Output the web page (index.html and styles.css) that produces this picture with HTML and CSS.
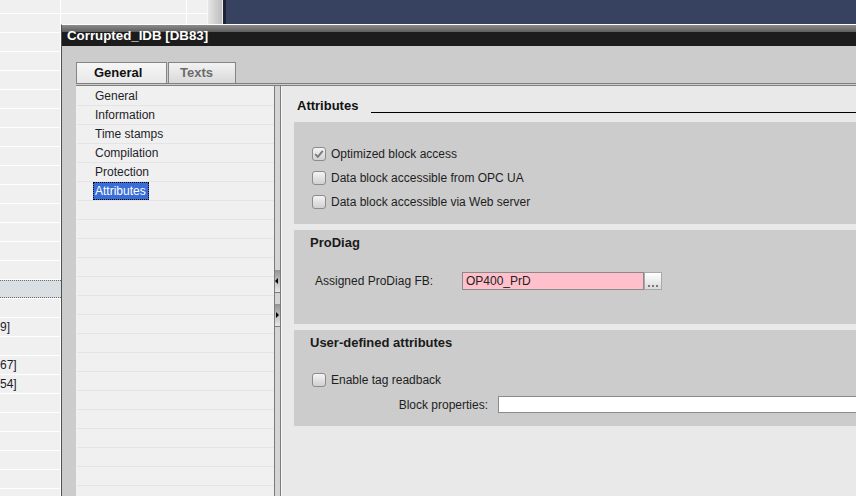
FILE: index.html
```html
<!DOCTYPE html>
<html>
<head>
<meta charset="utf-8">
<link rel="stylesheet" href="styles.css">
</head>
<body>
<div class="desk">
  <div class="app-list">
    <div class="ar first"></div>
    <div class="ar"></div><div class="ar"></div><div class="ar"></div><div class="ar"></div><div class="ar"></div>
    <div class="ar"></div><div class="ar"></div><div class="ar"></div><div class="ar"></div><div class="ar"></div>
    <div class="ar"></div><div class="ar"></div><div class="ar"></div><div class="ar"></div>
    <div class="ar"><div class="ar-sel"></div></div>
    <div class="ar"></div>
    <div class="ar">9]</div>
    <div class="ar"></div>
    <div class="ar">67]</div>
    <div class="ar">54]</div>
    <div class="ar"></div><div class="ar"></div><div class="ar"></div><div class="ar"></div><div class="ar"></div>
  </div>
  <div class="app-sep"></div>
  <div class="app-navy"></div>
</div>

<div class="win">
  <div class="win-title">Corrupted_IDB [DB83]</div>
  <div class="win-body">
    <div class="tabs">
      <div class="tab tab-general">General</div>
      <div class="tab tab-texts">Texts</div>
    </div>
    <div class="frame">
      <div class="frame-inner">
        <div class="nav">
          <div class="ni"><span>General</span></div>
          <div class="ni"><span>Information</span></div>
          <div class="ni"><span>Time stamps</span></div>
          <div class="ni"><span>Compilation</span></div>
          <div class="ni"><span>Protection</span></div>
          <div class="ni"><span class="sel">Attributes</span></div>
          <div class="ni"></div><div class="ni"></div><div class="ni"></div><div class="ni"></div>
          <div class="ni"></div><div class="ni"></div><div class="ni"></div><div class="ni"></div>
          <div class="ni"></div><div class="ni"></div><div class="ni"></div><div class="ni"></div>
          <div class="ni"></div><div class="ni"></div><div class="ni"></div>
        </div>
        <div class="split">
          <div class="sbtn sbtn-1"><i class="tri-l"></i></div>
          <div class="sbtn sbtn-2"><i class="tri-r"></i></div>
        </div>
        <div class="content">
          <div class="sec-title"><span>Attributes</span><div class="rule"></div></div>

          <div class="panel panel-1">
            <div class="chk-row">
              <div class="cb"><svg width="12" height="12" viewBox="0 0 12 12"><path d="M2.2 6.2 L4.8 8.8 L9.8 2.8" fill="none" stroke="#7a7a7a" stroke-width="1.9"/></svg></div>
              <span>Optimized block access</span>
            </div>
            <div class="chk-row"><div class="cb"></div><span>Data block accessible from OPC UA</span></div>
            <div class="chk-row"><div class="cb"></div><span>Data block accessible via Web server</span></div>
          </div>

          <div class="panel panel-2">
            <div class="ph">ProDiag</div>
            <div class="field">
              <div class="flabel">Assigned ProDiag FB:</div>
              <div class="finput">OP400_PrD</div>
              <div class="fbtn"><i></i><i></i><i></i></div>
            </div>
          </div>

          <div class="panel panel-3">
            <div class="ph">User-defined attributes</div>
            <div class="chk-row chk-3"><div class="cb"></div><span>Enable tag readback</span></div>
            <div class="field2">
              <div class="f2label">Block properties:</div>
              <div class="f2input"></div>
            </div>
          </div>
        </div>
      </div>
    </div>
  </div>
</div>
</body>
</html>
```

FILE: styles.css
```css
body {
  margin: 0;
  width: 856px;
  height: 496px;
  overflow: hidden;
  position: relative;
  font-family: "Liberation Sans", Arial, sans-serif;
  font-size: 12px;
  color: #1e1e1e;
  background: #f0f0f0;
}

/* background application */
.desk {
  display: flex;
  height: 496px;
  overflow: hidden;
}
.app-list {
  width: 207px;
  height: 496px;
  overflow: hidden;
  background:
    linear-gradient(to right, transparent 60px, #fff 60px, #fff 61px, transparent 61px,
      transparent 186px, #fff 186px, #fff 187px, transparent 187px),
    #f0f0f0;
}
.ar {
  height: 18px;
  border-bottom: 1px solid #fff;
  line-height: 18px;
  white-space: nowrap;
  overflow: hidden;
  color: #1c1c2c;
}
.ar.first { height: 13px; }
.ar-sel {
  height: 18px;
  box-sizing: border-box;
  background: #dadfe4;
  border-top: 1px dotted #6a6a6a;
  border-bottom: 1px dotted #6a6a6a;
}
.app-sep {
  width: 19px;
  background: linear-gradient(to right, #f7f7f7 0, #f7f7f7 1px, #e6e6e6 1px, #bcbcbc 15px,
    #ececec 15px, #ececec 16px, #1d2336 16px, #1d2336 19px);
}
.app-navy {
  flex: 1;
  background: #374261;
}

/* dialog window */
.win {
  position: absolute;
  left: 61px;
  top: 24px;
  width: 794px;
  height: 471px;
  border-left: 1px solid #505050;
  border-top: 1px solid #fff;
  background: #cccccc;
  display: flex;
  flex-direction: column;
  overflow: hidden;
}
.win-title {
  height: 21px;
  box-sizing: border-box;
  background: linear-gradient(#8c8c8c, #5e5e5e 7px, #1c1c1c 7px);
  color: #fff;
  font-weight: bold;
  font-size: 13.3px;
  line-height: 21px;
  padding-left: 5px;
}
.win-body {
  flex: 1;
  min-height: 0;
  padding: 16px 0 0 14px;
  display: flex;
  flex-direction: column;
}
.tabs {
  display: flex;
  gap: 1px;
  height: 21px;
}
.tab {
  box-sizing: border-box;
  height: 21px;
  border: 1px solid #858585;
  border-bottom: 0;
  font-size: 13px;
  font-weight: bold;
  line-height: 20px;
}
.tab-general {
  width: 91px;
  padding-left: 17px;
  background: linear-gradient(#f6f6f6, #e8e8e8);
  color: #111;
}
.tab-texts {
  width: 68px;
  padding-left: 11px;
  background: linear-gradient(#f2f2f2, #d9d9d9);
  color: #6c6c6c;
}
.frame {
  flex: 1;
  min-height: 0;
  border-top: 1px solid #7f7f7f;
  padding-top: 1px;
  display: flex;
  flex-direction: column;
}
.frame-inner {
  flex: 1;
  min-height: 0;
  border-top: 1px solid #7f7f7f;
  display: flex;
}

/* navigation list */
.nav {
  width: 198px;
  box-sizing: border-box;
  padding-top: 1px;
  background: #f0f0f0;
  overflow: hidden;
}
.ni {
  height: 18px;
  border-bottom: 1px solid #e4e4e4;
  margin-left: 1px;
  padding-left: 16px;
}
.ni span {
  display: inline-block;
  line-height: 16px;
  border: 1px solid transparent;
  padding: 0 2px 0 1px;
  color: #1e1e2a;
}
.ni span.sel {
  background: #3a6ed7;
  color: #fff;
  border: 1px dotted #000;
}

/* splitter */
.split {
  width: 7px;
  box-sizing: border-box;
  border-left: 1px solid #7b7b7b;
  border-right: 1px solid #7b7b7b;
  background: #d4d4d4;
}
.sbtn {
  height: 23px;
  box-sizing: border-box;
  background: linear-gradient(#939393, #e8e8e8);
  border-bottom: 1px solid #7b7b7b;
  display: flex;
  align-items: center;
}
.sbtn-1 { margin-top: 184px; }
.sbtn-2 { margin-top: 11px; }
.tri-l {
  width: 0;
  height: 0;
  border-right: 3px solid #000;
  border-top: 3px solid transparent;
  border-bottom: 3px solid transparent;
}
.tri-r {
  width: 0;
  height: 0;
  border-left: 3px solid #000;
  border-top: 3px solid transparent;
  border-bottom: 3px solid transparent;
  margin-left: 1px;
}

/* content */
.content {
  flex: 1;
  border-left: 1px solid #f7f7f7;
  background: #e9e9e9;
  padding: 12px 0 0 12px;
}
.sec-title {
  display: flex;
  height: 16px;
  padding-left: 3px;
  font-size: 13px;
  font-weight: bold;
  line-height: 16px;
  color: #111;
}
.rule {
  flex: 1;
  height: 14px;
  border-bottom: 1px solid #000;
  margin-left: 13px;
}
.panel {
  background: #cccccc;
  margin-top: 6px;
}
.panel-1 {
  margin-top: 8px;
  padding: 20px 0 10px 18px;
}
.panel-2 { padding: 5px 0 34px 0; }
.panel-3 { padding: 5px 0 13px 0; }
.ph {
  padding-left: 16px;
  font-size: 13px;
  font-weight: bold;
  line-height: 16px;
  color: #1a1a1a;
}
.chk-row {
  display: flex;
  align-items: center;
  height: 24px;
}
.chk-3 {
  margin-top: 17px;
  padding-left: 18px;
}
.cb {
  width: 14px;
  height: 14px;
  box-sizing: border-box;
  border: 1px solid #8c8c8c;
  border-radius: 3px;
  background: linear-gradient(#f4f4f4, #d0d0d0);
  margin-right: 5px;
  display: flex;
  align-items: center;
  justify-content: center;
}
.cb svg { display: block; }
.field {
  display: flex;
  align-items: center;
  height: 18px;
  margin-top: 21px;
  padding-left: 21px;
}
.flabel { width: 147px; }
.finput {
  width: 182px;
  height: 18px;
  box-sizing: border-box;
  border: 1px solid #8a8a8a;
  background: #ffc0cb;
  padding-left: 3px;
  line-height: 16px;
  color: #222;
}
.fbtn {
  width: 18px;
  height: 18px;
  box-sizing: border-box;
  border: 1px solid #a9a9a9;
  background: linear-gradient(#ffffff, #dadada);
  display: flex;
  align-items: flex-end;
  gap: 2px;
  padding: 0 0 2px 3px;
}
.fbtn i {
  width: 2px;
  height: 2px;
  background: #777;
}
.field2 {
  display: flex;
  align-items: center;
  height: 17px;
  margin-top: 4px;
}
.f2label {
  width: 194px;
  text-align: right;
  margin-right: 10px;
}
.f2input {
  flex: 1;
  height: 17px;
  box-sizing: border-box;
  border: 1px solid #8a8a8a;
  border-right: 0;
  background: #fff;
}
```
